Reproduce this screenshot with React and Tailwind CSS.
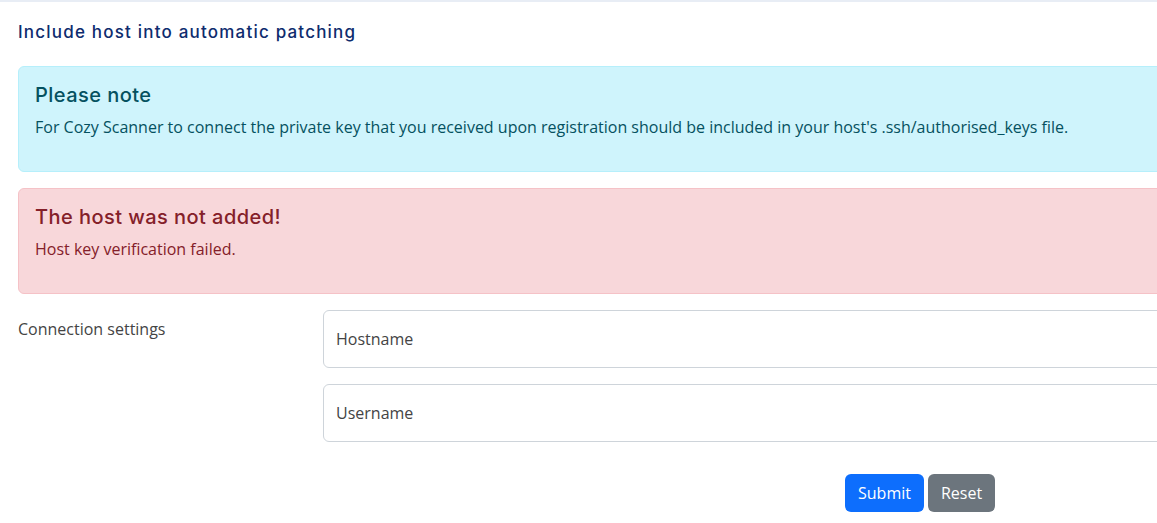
import React from 'react';

const App = () => {
  return (
    <div className="w-[1157px] h-[523px] overflow-hidden bg-white" style={{ fontFamily: '"Open Sans", sans-serif' }}>
      <div className="h-[2px] bg-[#e8edf5]" />
      <div className="w-[1200px] pl-[18px]">
        <h5 className="pt-[19px] text-[17px] font-medium tracking-[1.2px] text-[#0e2c6e] leading-[22px] font-['Inter',sans-serif]">
          Include host into automatic patching
        </h5>

        {/* Info alert */}
        <div className="mt-[23px] h-[106px] rounded-md border border-[#b6effb] bg-[#cff4fc] px-4 pt-[16px] text-[#055160]">
          <h4 className="text-[20px] font-medium tracking-[0.45px] leading-[24px] font-['Inter',sans-serif]">Please note</h4>
          <p className="mt-[8px] text-[16px] leading-[24px]">
            For Cozy Scanner to connect the private key that you received upon registration should be included in your host's .ssh/authorised_keys file.
          </p>
        </div>

        {/* Danger alert */}
        <div className="mt-[16px] h-[106px] rounded-md border border-[#f5c2c7] bg-[#f8d7da] px-4 pt-[16px] text-[#842029]">
          <h4 className="text-[20px] font-medium tracking-[0.45px] leading-[24px] font-['Inter',sans-serif]">The host was not added!</h4>
          <p className="mt-[8px] text-[16px] leading-[24px]">Host key verification failed.</p>
        </div>

        {/* Form */}
        <div className="mt-[16px] flex">
          <label className="w-[305px] pt-[7px] text-[16px] leading-[24px] text-[#444]">Connection settings</label>
          <div className="flex flex-1 flex-col gap-4">
            <input
              placeholder="Hostname"
              className="h-[58px] w-full rounded-md border border-[#ced4da] bg-white px-3 text-[16px] text-[#212529] placeholder:text-[#444] outline-none"
            />
            <input
              placeholder="Username"
              className="h-[58px] w-full rounded-md border border-[#ced4da] bg-white px-3 text-[16px] text-[#212529] placeholder:text-[#444] outline-none"
            />
          </div>
        </div>

        <div className="mt-[32px] flex gap-[4px] pl-[827px]">
          <button className="h-[38px] rounded-md bg-[#0d6efd] px-[13px] text-[16px] text-white">Submit</button>
          <button className="h-[38px] rounded-md bg-[#6c757d] px-[13px] text-[16px] text-white">Reset</button>
        </div>
      </div>
    </div>
  );
};

export default App;
